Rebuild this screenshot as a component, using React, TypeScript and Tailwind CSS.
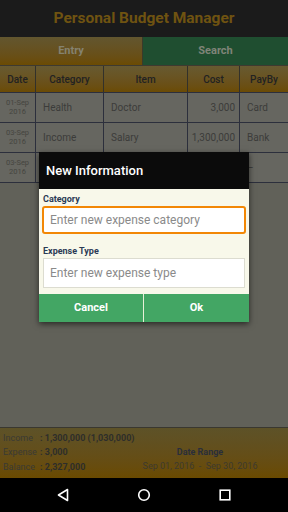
import React from "react";

const rows = [
  { d: "01-Sep", y: "2016", cat: "Health", item: "Doctor", cost: "3,000", pay: "Card" },
  { d: "03-Sep", y: "2016", cat: "Income", item: "Salary", cost: "1,300,000", pay: "Bank" },
  { d: "03-Sep", y: "2016", cat: "", item: "", cost: "", pay: "–" },
];

export default function App() {
  return (
    <div
      className="relative w-[288px] h-[512px] flex flex-col bg-[#616159] overflow-hidden"
      style={{ fontFamily: "Roboto, 'Noto Sans', sans-serif" }}
    >
      {/* Title */}
      <div className="h-[37px] flex items-center justify-center bg-[#1b1b1b]">
        <span className="text-[15.5px] font-bold text-[#6f5311]">Personal Budget Manager</span>
      </div>
      {/* Tabs */}
      <div className="h-[28px] flex">
        <div className="w-[143px] flex items-center justify-center bg-gradient-to-b from-[#62562f] to-[#6b4b02] border-r border-[#3a3a2a]">
          <span className="text-[11px] font-bold text-[#85826f]">Entry</span>
        </div>
        <div className="flex-1 flex items-center justify-center bg-[#1f4e30]">
          <span className="text-[11px] font-bold text-[#7f8478]">Search</span>
        </div>
      </div>
      {/* Table header */}
      <div className="h-[27px] flex bg-gradient-to-b from-[#675a31] to-[#6b4b04] border-t border-[#3e3a30] text-[10px] text-[#222] font-medium">
        <div className="w-[36px] flex items-center justify-center border-r border-[#33312a]">Date</div>
        <div className="w-[68px] flex items-center justify-center border-r border-[#33312a]">Category</div>
        <div className="w-[84px] flex items-center justify-center border-r border-[#33312a]">Item</div>
        <div className="w-[52px] flex items-center justify-center border-r border-[#33312a]">Cost</div>
        <div className="flex-1 flex items-center justify-center">PayBy</div>
      </div>
      {/* Rows */}
      {rows.map((r, i) => (
        <div key={i} className="h-[30px] flex bg-[#666660] border-t border-[#2c2f3c] text-[10px] text-[#3c3c3a]">
          <div className="w-[36px] flex flex-col items-center justify-center border-r border-[#2c2f3c] text-[7.5px] leading-[8.5px] text-[#45453f]">
            <span>{r.d}</span>
            <span>{r.y}</span>
          </div>
          <div className="w-[68px] flex items-center pl-[7px] border-r border-[#2c2f3c]">{r.cat}</div>
          <div className="w-[84px] flex items-center pl-[7px] border-r border-[#2c2f3c]">{r.item}</div>
          <div className="w-[52px] flex items-center justify-end pr-[4px] border-r border-[#2c2f3c]">{r.cost}</div>
          <div className="flex-1 flex items-center pl-[7px]">{r.pay}</div>
        </div>
      ))}
      <div className="border-t border-[#2c2f3c]" />
      <div className="flex-1" />
      {/* Footer */}
      <div className="h-[51px] flex border-t border-[#3a3830] bg-gradient-to-b from-[#5d5228] to-[#6a4a00] text-[9px] leading-[11px] text-[#3a3a34]">
        <div className="w-[140px] flex flex-col justify-center pl-[3px] gap-[3.5px] pb-[1px] whitespace-nowrap">
          <div className="flex">
            <span className="w-[37px]">Income</span>
            <span className="font-bold text-[#2e2e2a]">: 1,300,000 (1,030,000)</span>
          </div>
          <div className="flex">
            <span className="w-[37px]">Expense</span>
            <span className="font-bold text-[#2e2e2a]">: 3,000</span>
          </div>
          <div className="flex">
            <span className="w-[37px]">Balance</span>
            <span className="font-bold text-[#2e2e2a]">: 2,327,000</span>
          </div>
        </div>
        <div className="flex-1 flex flex-col items-center justify-end pb-[6px] pr-[28px] gap-[3px] whitespace-nowrap">
          <span className="font-bold text-[#2a2e3a]">Date Range</span>
          <span className="text-[#3d3a2e]">Sep 01, 2016&nbsp;&nbsp;-&nbsp;&nbsp;Sep 30, 2016</span>
        </div>
      </div>
      {/* Nav bar */}
      <div className="h-[34px] flex items-center justify-between bg-black px-[56px]">
        <svg width="14" height="14" viewBox="0 0 14 14">
          <path d="M11.5 1.5 L2.5 7 L11.5 12.5 Z" fill="none" stroke="white" strokeWidth="1.6" strokeLinejoin="round" />
        </svg>
        <svg width="14" height="14" viewBox="0 0 14 14">
          <circle cx="7" cy="7" r="5.3" fill="none" stroke="white" strokeWidth="1.6" />
        </svg>
        <svg width="14" height="14" viewBox="0 0 14 14">
          <rect x="2.2" y="2.2" width="9.6" height="9.6" fill="none" stroke="white" strokeWidth="1.6" />
        </svg>
      </div>

      {/* Dialog */}
      <div className="absolute left-[39px] top-[152px] w-[210px] h-[170px] flex flex-col shadow-[0_2px_6px_rgba(0,0,0,0.6)]">
        <div className="h-[37px] bg-[#0b0b0b] flex items-center pl-[7px]">
          <span className="text-[13px] font-medium text-white">New Information</span>
        </div>
        <div className="h-[105px] bg-[#f8f8ea] flex flex-col px-[3px] pt-[5px]">
          <span className="h-[11px] leading-[11px] text-[9px] font-bold text-[#2b3a55] pl-[1px]">Category</span>
          <div className="mt-[1px] h-[28px] bg-white border-2 border-[#f28705] rounded-[3px] flex items-center pl-[6px]">
            <span className="text-[12px] leading-[14px] text-[#8a8a8a]">Enter new expense category</span>
          </div>
          <span className="mt-[12px] h-[11px] leading-[11px] text-[9px] font-bold text-[#2b3a55] pl-[1px]">Expense Type</span>
          <div className="mt-[1px] mx-[1px] h-[30px] bg-white border border-[#dcdcd0] flex items-center pl-[6px]">
            <span className="text-[12px] leading-[14px] text-[#8a8a8a]">Enter new expense type</span>
          </div>
        </div>
        <div className="h-[28px] flex bg-[#43a664]">
          <div className="w-[105px] flex items-center justify-center border-r border-[#e8f0d8]">
            <span className="text-[11px] font-bold text-white">Cancel</span>
          </div>
          <div className="flex-1 flex items-center justify-center">
            <span className="text-[11px] font-bold text-white">Ok</span>
          </div>
        </div>
      </div>
    </div>
  );
}
